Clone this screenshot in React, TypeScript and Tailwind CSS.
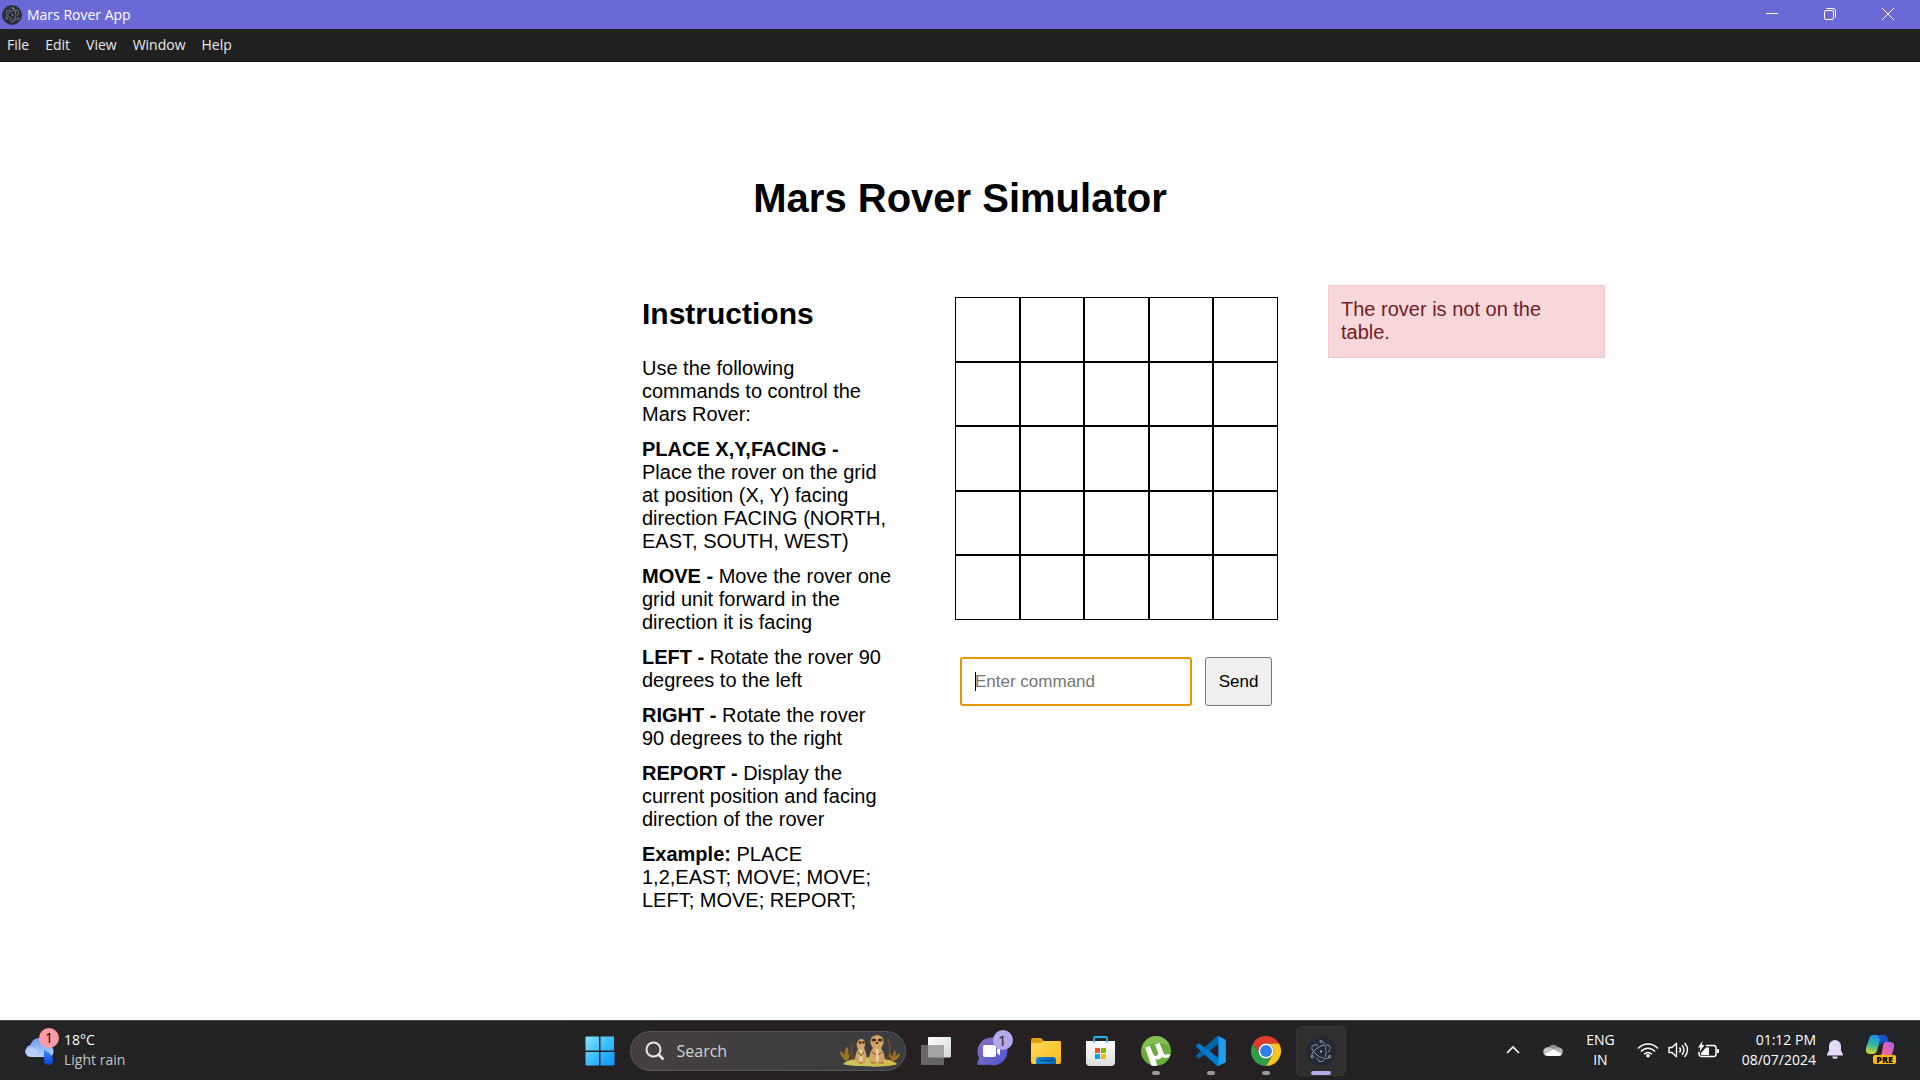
import React from "react";
import { SiElectron } from "react-icons/si";

const menuItems = ["File", "Edit", "View", "Window", "Help"];

const commands = [
  { name: "PLACE X,Y,FACING -", text: "Place the rover on the grid at position (X, Y) facing direction FACING (NORTH, EAST, SOUTH, WEST)" },
  { name: "MOVE -", text: "Move the rover one grid unit forward in the direction it is facing" },
  { name: "LEFT -", text: "Rotate the rover 90 degrees to the left" },
  { name: "RIGHT -", text: "Rotate the rover 90 degrees to the right" },
  { name: "REPORT -", text: "Display the current position and facing direction of the rover" },
  { name: "Example:", text: "PLACE 1,2,EAST; MOVE; MOVE; LEFT; MOVE; REPORT;" },
];

function TitleBar() {
  return (
    <header className="flex h-[29px] items-center justify-between bg-[#6b69d6] text-white">
      <div className="flex items-center gap-[5px] pl-[2px]">
        <span className="flex size-5 items-center justify-center rounded-full bg-[#2b2e3a]">
          <SiElectron className="size-[15px] text-[#a9c6cf]" />
        </span>
        <span className="text-[14px] leading-5">Mars Rover App</span>
      </div>
      <div className="flex h-full pr-[3px]">
        <button aria-label="Minimize" className="flex w-[58px] items-center justify-center pb-1">
          <svg width="12" height="12" viewBox="0 0 12 12" stroke="#fff"><path d="M0 6.500h12" /></svg>
        </button>
        <button aria-label="Restore" className="flex w-[58px] items-center justify-center pb-0.5">
          <svg width="12" height="12" viewBox="0 0 12 12" fill="none" stroke="#fff">
            <rect x=".5" y="2.5" width="9" height="9" rx="1.5" />
            <path d="M2.5 .5h6.500a2.500 2.500 0 0 1 2.500 2.500v6.500" />
          </svg>
        </button>
        <button aria-label="Close" className="flex w-[58px] items-center justify-center pb-0.5">
          <svg width="12" height="12" viewBox="0 0 12 12" stroke="#fff"><path d="M0 0l12 12M12 0L0 12" /></svg>
        </button>
      </div>
    </header>
  );
}

function MenuBar() {
  return (
    <nav className="flex h-[33px] items-center gap-4 border-b border-[#1b1416] bg-[#202020] px-[7px] text-[14px] leading-5 text-[#e9e9e9]">
      {menuItems.map((m) => (
        <button key={m}>{m}</button>
      ))}
    </nav>
  );
}

function Simulator() {
  return (
    <main className="flex-1 bg-white pt-[113px] font-['Liberation_Sans',Arial,sans-serif] text-[20px] leading-[23px] text-black">
      <h1 className="text-center text-[40px] leading-[46px] font-bold">Mars Rover Simulator</h1>
      <div className="mt-16 grid grid-cols-[277px_263px_323px_277px] items-start justify-center gap-x-[50px]">
        <section className="col-start-2 flex flex-col gap-3 pt-3 pr-3">
          <h2 className="mb-3.5 text-[30px] leading-[34px] font-bold">Instructions</h2>
          <p>Use the following commands to control the Mars Rover:</p>
          {commands.map((c) => (
            <p key={c.name}>
              <strong>{c.name}</strong> {c.text}
            </p>
          ))}
        </section>
        <section className="pt-3">
          <div className="grid aspect-square grid-cols-5 grid-rows-5">
            {Array.from({ length: 25 }, (_, i) => (
              <div key={i} className="border border-black" />
            ))}
          </div>
          <form className="mt-[37px] flex gap-[13px] pl-[5px]" onSubmit={(e) => e.preventDefault()}>
            <div className="relative flex items-center">
              <input
                type="text"
                aria-label="Enter command"
                placeholder="Enter command"
                className="h-[49px] w-[232px] rounded-[3px] border-2 border-[#e59700] bg-white px-[13px] text-[17px] outline-none placeholder:text-[#757575]"
              />
              <span className="absolute left-[15px] h-[19px] w-px bg-black" />
            </div>
            <button type="submit" className="h-[49px] w-[67px] rounded-[3px] border border-[#767676] bg-[#efefef] text-[17px]">
              Send
            </button>
          </form>
        </section>
        <div role="alert" className="border border-[#f5c6cb] bg-[#f8d7da] px-3 pt-3 pb-[13px] text-[#721c24]">
          The rover is not on the table.
        </div>
      </div>
    </main>
  );
}

function WeatherIcon() {
  return (
    <svg width="34" height="38" viewBox="0 0 34 38">
      <defs>
        <linearGradient id="cloud" x1="0" y1="0" x2="0" y2="1"><stop offset="0" stopColor="#6d9cf0" /><stop offset="1" stopColor="#b9d2fb" /></linearGradient>
        <linearGradient id="drop" x1="0" y1="0" x2="0" y2="1"><stop offset="0" stopColor="#3f8cf5" /><stop offset="1" stopColor="#0a3fe0" /></linearGradient>
      </defs>
      <path d="M6 29a6 6 0 0 1-.5-11.900C7 12 11 9.500 15.500 10c5 0 8 3 9 7.500A6 6 0 0 1 24 29z" fill="url(#cloud)" />
      <path d="M0 23c4-5 9-5 14 0-2 4-4 6-8 6s-6-3-6-6z" fill="#c4d9fb" opacity=".6" />
      <path d="M19 22c5 2 9 6 9 10.500a4.500 4.500 0 0 1-9 0z" fill="url(#drop)" />
      <circle cx="24" cy="10" r="10" fill="#ff99a4" />
    </svg>
  );
}

function Meerkats() {
  return (
    <svg width="62" height="34" viewBox="0 0 62 34">
      <path d="M4 30c8-9 44-9 54 0-4 3-48 3-54 0z" fill="#c9c35a" />
      <path d="M32 24c12 0 22 2 26 6-4 2-16 3-26 3z" fill="#d9b944" opacity=".7" />
      <path d="M7 27C3 24 1 21 1 17c4 2 5 4 5 7-1-4 0-9 2-12 2 4 2 8 0 12 1-3 2-4 3-5 0 4-1 7-4 8zM54 27c-3-2-4-4-4-8 3 2 4 4 4 6-1-3 0-7 2-9 1 3 1 6 0 8 1-3 3-4 5-5 0 4-3 7-7 8z" fill="#a3701c" />
      <path d="M15 26c-3-5-3-12-1-17M48 26c3-6 4-14 1-21" fill="none" stroke="#7a4d1e" strokeWidth="1.600" />
      <path d="M17 29c-2-5 0-10 2-14-2-3-2-9 3-10 5 0 5 6 3 9 2 4 4 10 1 15z" fill="#d2a468" />
      <path d="M31 29c-2-5 0-11 3-15-4-5-4-12 4-13 8 1 8 8 4 13 3 4 5 11 3 15z" fill="#d2a468" />
      <path d="M21.500 16c1 3 1 8 0 11M38 15c1 4 1 8 0 12" stroke="#ecd0a2" strokeWidth="3" fill="none" />
      <ellipse cx="21" cy="8.500" rx="1.600" ry="1.300" fill="#43291e" />
      <ellipse cx="24.500" cy="8.500" rx="1.300" ry="1.300" fill="#43291e" />
      <ellipse cx="34.800" cy="6" rx="2.400" ry="1.600" fill="#43291e" />
      <ellipse cx="41.200" cy="6" rx="2.400" ry="1.600" fill="#43291e" />
      <ellipse cx="38" cy="9" rx="1.400" ry="1" fill="#43291e" />
      <path d="M19 18l4 4M25 18l-3 4M33 18l4 3M43 18l-4 3M20 29h4M32 29h5M40 29h5" stroke="#9c6b35" strokeWidth="1.200" fill="none" />
    </svg>
  );
}

function StartIcon() {
  return (
    <svg width="30" height="30" viewBox="0 0 30 30">
      <defs>
        <linearGradient id="win" gradientUnits="userSpaceOnUse" x1="0" y1="0" x2="29" y2="29"><stop offset="0" stopColor="#8be1fb" /><stop offset=".5" stopColor="#3cc0fb" /><stop offset="1" stopColor="#0a93f5" /></linearGradient>
      </defs>
      <path d="M1 .5h13v14H.500V1zM15.500 .5H29v14H15.500zM.5 16h13.500v13.500H1L.5 29zM15.500 16H29.500V29l-.5.5H15.500z" fill="url(#win)" />
    </svg>
  );
}

function TaskViewIcon() {
  return (
    <svg width="30" height="28" viewBox="0 0 30 28">
      <defs><linearGradient id="tv" x1="0" y1="0" x2="1" y2="1"><stop offset="0" stopColor="#fff" /><stop offset="1" stopColor="#d6d6d6" /></linearGradient></defs>
      <rect x="7" width="23" height="20.500" rx="1" fill="url(#tv)" />
      <rect y="8" width="23" height="20" rx="1" fill="#666" />
      <path d="M7 8h16v12.500H8a1 1 0 0 1-1-1z" fill="#a5a5a5" />
    </svg>
  );
}

function ChatIcon() {
  return (
    <svg width="36" height="36" viewBox="0 0 36 36">
      <defs><linearGradient id="chat" x1="0" y1="0" x2="1" y2="1"><stop offset="0" stopColor="#8f6fc4" /><stop offset=".6" stopColor="#6663cc" /><stop offset="1" stopColor="#4a52c9" /></linearGradient></defs>
      <path d="M14.500 7.500a14 14 0 1 1-2 27.300L1.200 35c-1-.1-1.200-.8-.9-1.500L2 28A14 14 0 0 1 14.500 7.500z" fill="url(#chat)" />
      <rect x="6" y="15" width="13" height="12" rx="2" fill="#fff" />
      <path d="M20 19l3-2.500v9L20 23z" fill="#fff" />
      <circle cx="26" cy="10" r="10" fill="#b4a9ea" />
    </svg>
  );
}

function FolderIcon() {
  return (
    <svg width="30" height="28" viewBox="0 0 30 28">
      <defs>
        <linearGradient id="fold" x1="0" y1="0" x2="1" y2="1"><stop offset="0" stopColor="#ffda61" /><stop offset="1" stopColor="#fbb911" /></linearGradient>
        <linearGradient id="foldb" x1="0" y1="0" x2="1" y2="0"><stop offset="0" stopColor="#1587dc" /><stop offset="1" stopColor="#0a66b8" /></linearGradient>
      </defs>
      <path d="M0 3a2 2 0 0 1 2-2h8l3 3v6H0z" fill="#e2a00c" />
      <path d="M0 6h10l3-2h16a1 1 0 0 1 1 1v20a2 2 0 0 1-2 2H2a2 2 0 0 1-2-2z" fill="url(#fold)" />
      <path d="M5 27v-4a3 3 0 0 1 3-3h14a3 3 0 0 1 3 3v4z" fill="url(#foldb)" />
      <path d="M8.500 23.500h13" stroke="#064a85" strokeWidth="1.300" />
    </svg>
  );
}

function StoreIcon() {
  return (
    <svg width="30" height="30" viewBox="0 0 30 30">
      <defs><linearGradient id="store" x1="0" y1="0" x2="0" y2="1"><stop offset="0" stopColor="#fff" /><stop offset="1" stopColor="#dcdcdc" /></linearGradient></defs>
      <path d="M0 5h29v21a4 4 0 0 1-4 4H4a4 4 0 0 1-4-4z" fill="url(#store)" />
      <path d="M8 6.500V2a1 1 0 0 1 1-1h11a1 1 0 0 1 1 1v4.500" fill="none" stroke="#28b2ea" strokeWidth="1.800" />
      <path d="M9 12h5v5H9z" fill="#f25022" /><path d="M15 12h5v5h-5z" fill="#7fba00" />
      <path d="M9 18h5v5H9z" fill="#00a4ef" /><path d="M15 18h5v5h-5z" fill="#ffb900" />
    </svg>
  );
}

function TorrentIcon() {
  return (
    <svg width="30" height="30" viewBox="0 0 30 30">
      <circle cx="15" cy="15" r="15" fill="#69ae3a" />
      <path d="M15 0a15 15 0 0 1 14 10C20 5 8 6 1 13A15 15 0 0 1 15 0z" fill="#8cc65e" opacity=".7" />
      <path d="M4 11.500l4.800-1.700 3.400 8.400c1.300 3 5.500 1.800 4.800-1.600L14 8.500l4.600-1.600 4 10.200c.8 2 2.600 2 3.900.9l3 .8c-1.200 3.400-6.300 4.300-8.300 1.700-1.500 2.800-4.300 3.600-6.900 2.400l2 6.600c-2 .6-4.300.5-6 0z" fill="#fff" />
    </svg>
  );
}

function CodeIcon() {
  return (
    <svg width="30" height="30" viewBox="0 0 100 100">
      <path d="M96 10.600L75.500.7a6.200 6.200 0 0 0-7.100 1.200L1.300 63.100a4.200 4.200 0 0 0 0 6.100l5.500 5a4.200 4.200 0 0 0 5.300.3L93 13.200c2.700-2 6.600-.1 6.600 3.300v-.3c0-2.300-1.400-4.500-3.600-5.600z" fill="#0065a9" />
      <path d="M96 89.400l-20.500 9.900a6.200 6.200 0 0 1-7.100-1.200L1.300 36.900a4.200 4.200 0 0 1 0-6.100l5.500-5a4.200 4.200 0 0 1 5.300-.3L93 86.800c2.700 2 6.600.1 6.600-3.300v.3c0 2.300-1.400 4.500-3.600 5.600z" fill="#007acc" />
      <path d="M75.500 99.300a6.200 6.200 0 0 1-7.100-1.200c2.300 2.300 6.200.7 6.200-2.600V4.500c0-3.300-3.900-4.900-6.200-2.600A6.200 6.200 0 0 1 75.500.7L96 10.600a6.200 6.200 0 0 1 3.600 5.600v67.600a6.200 6.200 0 0 1-3.600 5.600z" fill="#1f9cf0" />
    </svg>
  );
}

function ChromeIcon() {
  return (
    <svg width="30" height="30" viewBox="0 0 48 48">
      <path d="M3.200 12A24 24 0 0 1 44.800 12H24a12 12 0 0 0-10.400 18z" fill="#e33b2e" />
      <path d="M44.800 12A24 24 0 0 1 24 48l10.400-18A12 12 0 0 0 24 12z" fill="#fcc31e" />
      <path d="M24 48A24 24 0 0 1 3.200 12l10.400 18a12 12 0 0 0 20.800 0z" fill="#2c9f47" />
      <circle cx="24" cy="24" r="12" fill="#fff" />
      <circle cx="24" cy="24" r="9.500" fill="#2f7de9" />
    </svg>
  );
}

function CopilotIcon() {
  return (
    <svg width="28" height="24" viewBox="0 0 28 24">
      <defs>
        <linearGradient id="cpa" x1=".5" y1="0" x2=".3" y2="1"><stop offset="0" stopColor="#1a8ee8" /><stop offset=".5" stopColor="#2fb6a8" /><stop offset="1" stopColor="#d3d72b" /></linearGradient>
        <linearGradient id="cpb" x1="1" y1="0" x2="0" y2="1"><stop offset="0" stopColor="#a95cf5" /><stop offset=".5" stopColor="#ea62a8" /><stop offset="1" stopColor="#ff8a5c" /></linearGradient>
      </defs>
      <path d="M7 0h11c-3 2-4 5-5 9l-2 7c-1 2-2 3-4 3H4c-3 0-5-2-4-6L3 4c1-3 2-4 4-4z" fill="url(#cpa)" />
      <path d="M11 0h7c2 0 3 1 4 4l1 3h-5c-2 0-3 1-4 3 0-5 0-8-3-10z" fill="#1552c9" />
      <path d="M19 7h5c3 0 5 2 4 6l-3 9c-1 2-2 2-4 2H11c3-1 4-3 5-7l1-6c0-2 1-4 2-4z" fill="url(#cpb)" />
    </svg>
  );
}

type TaskProps = { label: string; children: React.ReactNode; state?: "open" | "active" };

function TaskButton({ label, children, state }: TaskProps) {
  return (
    <button
      aria-label={label}
      className={
        state === "active"
          ? "relative flex size-[50px] items-center justify-center rounded-[5px] border border-[#3b3838] bg-[#302e2e]"
          : "relative flex size-[50px] items-center justify-center"
      }
    >
      {children}
      {state === "open" && <span className="absolute bottom-[1px] h-1 w-2 rounded-full bg-[#9a9898]" />}
      {state === "active" && <span className="absolute bottom-0 h-1 w-5 rounded-full bg-[#b4a9ea]" />}
    </button>
  );
}

function Taskbar() {
  return (
    <footer className="grid h-[60px] grid-cols-[1fr_auto_1fr] items-center border-t border-[#454748] bg-linear-to-r from-[#222426] via-[#262021] to-[#222426] text-[14px] leading-5 text-white">
      <button className="flex items-center gap-[5px] justify-self-start pb-0.5 pl-[25px] text-left">
        <span className="relative pb-1.5">
          <WeatherIcon />
          <span className="absolute top-0 left-[20px] leading-5 text-black">1</span>
        </span>
        <span>
          <span className="block">18°C</span>
          <span className="block text-[#c4c5c6]">Light rain</span>
        </span>
      </button>

      <div className="flex items-center gap-[5px]">
        <TaskButton label="Start"><StartIcon /></TaskButton>
        <label className="flex h-10 w-[276px] items-center rounded-full border border-[#575557] bg-linear-to-r from-[#463f40] to-[#3a3d3f] pr-1 pl-3.5">
          <svg width="20" height="20" viewBox="0 0 20 20" fill="none" stroke="#e6e6e6" strokeWidth="2">
            <circle cx="8.500" cy="8.500" r="7" /><path d="M13.500 13.500l5 5" strokeWidth="2.500" />
          </svg>
          <input type="search" placeholder="Search" aria-label="Search" className="ml-3 min-w-0 flex-1 bg-transparent text-[16px] outline-none placeholder:text-[#d5d4d4]" />
          <Meerkats />
        </label>
        <TaskButton label="Task view"><TaskViewIcon /></TaskButton>
        <TaskButton label="Chat">
          <span className="pb-1.5 pl-2"><ChatIcon /></span>
          <span className="absolute top-1 right-[9px] text-[15px] leading-5 text-[#1d1b2b]">1</span>
        </TaskButton>
        <TaskButton label="File Explorer"><FolderIcon /></TaskButton>
        <TaskButton label="Microsoft Store"><StoreIcon /></TaskButton>
        <TaskButton label="uTorrent" state="open"><TorrentIcon /></TaskButton>
        <TaskButton label="Visual Studio Code" state="open"><CodeIcon /></TaskButton>
        <TaskButton label="Google Chrome" state="open"><ChromeIcon /></TaskButton>
        <TaskButton label="Mars Rover App" state="active">
          <span className="flex size-[30px] items-center justify-center rounded-full bg-[#262836]">
            <SiElectron className="size-[22px] text-[#a4cdd2]" />
          </span>
        </TaskButton>
      </div>

      <div className="flex items-center justify-self-end pr-6 pb-0.5">
        <button aria-label="Show hidden icons" className="mr-[23px]">
          <svg width="14" height="9" viewBox="0 0 14 9" fill="none" stroke="#fff" strokeWidth="1.600"><path d="M1 8l6-6 6 6" /></svg>
        </button>
        <button aria-label="OneDrive" className="mr-[23px]">
          <svg width="20" height="13" viewBox="0 0 20 13">
            <path d="M5 5a6 6 0 0 1 10.500-.5L10 8z" fill="#8c8c8c" />
            <path d="M4.500 4.300A4.300 4.300 0 0 0 1 11l9.500-4.500C9 5 7 4 4.500 4.300z" fill="#c6c6c6" />
            <path d="M15.500 4.300c-2 0-3 .8-5 2.200l8.500 4.300c2-2.500.5-6-3.500-6.500z" fill="#b0b0b0" />
            <path d="M1 11l9.500-4.800L19 10.800c-.6 1.400-1.600 2.200-3 2.200H4.300C3 13 1.700 12.300 1 11z" fill="#fff" />
          </svg>
        </button>
        <button className="mr-[22px] text-center">
          <span className="block">ENG</span>
          <span className="block">IN</span>
        </button>
        <button aria-label="Network, volume and battery" className="mr-[23px] flex items-center gap-[9px]">
          <svg width="22" height="16" viewBox="0 0 22 16" fill="none" stroke="#fff" strokeWidth="1.500">
            <path d="M1 6.500c5.500-6 14.500-6 20 0M4 9.500c4-4.400 10-4.400 14 0M7.200 12.300c2.200-2.400 5.400-2.400 7.600 0" />
            <circle cx="11" cy="13.800" r="1.800" fill="#fff" stroke="none" />
          </svg>
          <svg width="21" height="16" viewBox="0 0 21 16" fill="none" stroke="#fff" strokeWidth="1.400">
            <path d="M1 5.500h3L8.500 1.300v13.400L4 10.500H1z" strokeLinejoin="round" />
            <path d="M11.500 5.500c1.300 1.500 1.300 3.500 0 5M14 3.300c2.600 2.700 2.600 6.700 0 9.400M16.500 1c4 4 4 10 0 14" />
          </svg>
          <svg width="21" height="18" viewBox="0 0 21 18">
            <path d="M8 4.500h7.500a2.500 2.500 0 0 1 2.500 2.500v6a2.500 2.500 0 0 1-2.500 2.500h-12A2.500 2.500 0 0 1 1 13v-2" fill="none" stroke="#fff" strokeWidth="1.500" />
            <path d="M19 8h1c.6 0 1 .5 1 1v2c0 .6-.4 1-1 1h-1z" fill="#fff" />
            <path d="M4.500 0L0 6.500h2.500L1.500 11 6.500 4H4z" fill="#fff" />
            <path d="M8 6.500h3V14H3v-2z" fill="#fff" />
          </svg>
        </button>
        <button className="mr-[11px] text-right">
          <span className="block">01:12 PM</span>
          <span className="block">08/07/2024</span>
        </button>
        <button aria-label="Notifications" className="mr-[23px]">
          <svg width="16" height="19" viewBox="0 0 16 19" fill="#e4d9f7">
            <path d="M8 0a6 6 0 0 1 6 6v4.500l2 4v1H0v-1l2-4V6a6 6 0 0 1 6-6zM5.300 16.500h5.400a2.700 2.300 0 0 1-5.400 0z" />
          </svg>
        </button>
        <button aria-label="Copilot preview" className="relative flex h-[29px] w-[30px] items-start">
          <CopilotIcon />
          <span className="absolute right-0 bottom-0 rounded-[2px] bg-[#fbbc05] px-[3px] text-[9px] leading-[9px] font-extrabold text-black">PRE</span>
        </button>
      </div>
    </footer>
  );
}

export default function App() {
  return (
    <div className="flex min-h-screen flex-col font-['Open_Sans','Noto_Sans',sans-serif]">
      <TitleBar />
      <MenuBar />
      <Simulator />
      <Taskbar />
    </div>
  );
}
